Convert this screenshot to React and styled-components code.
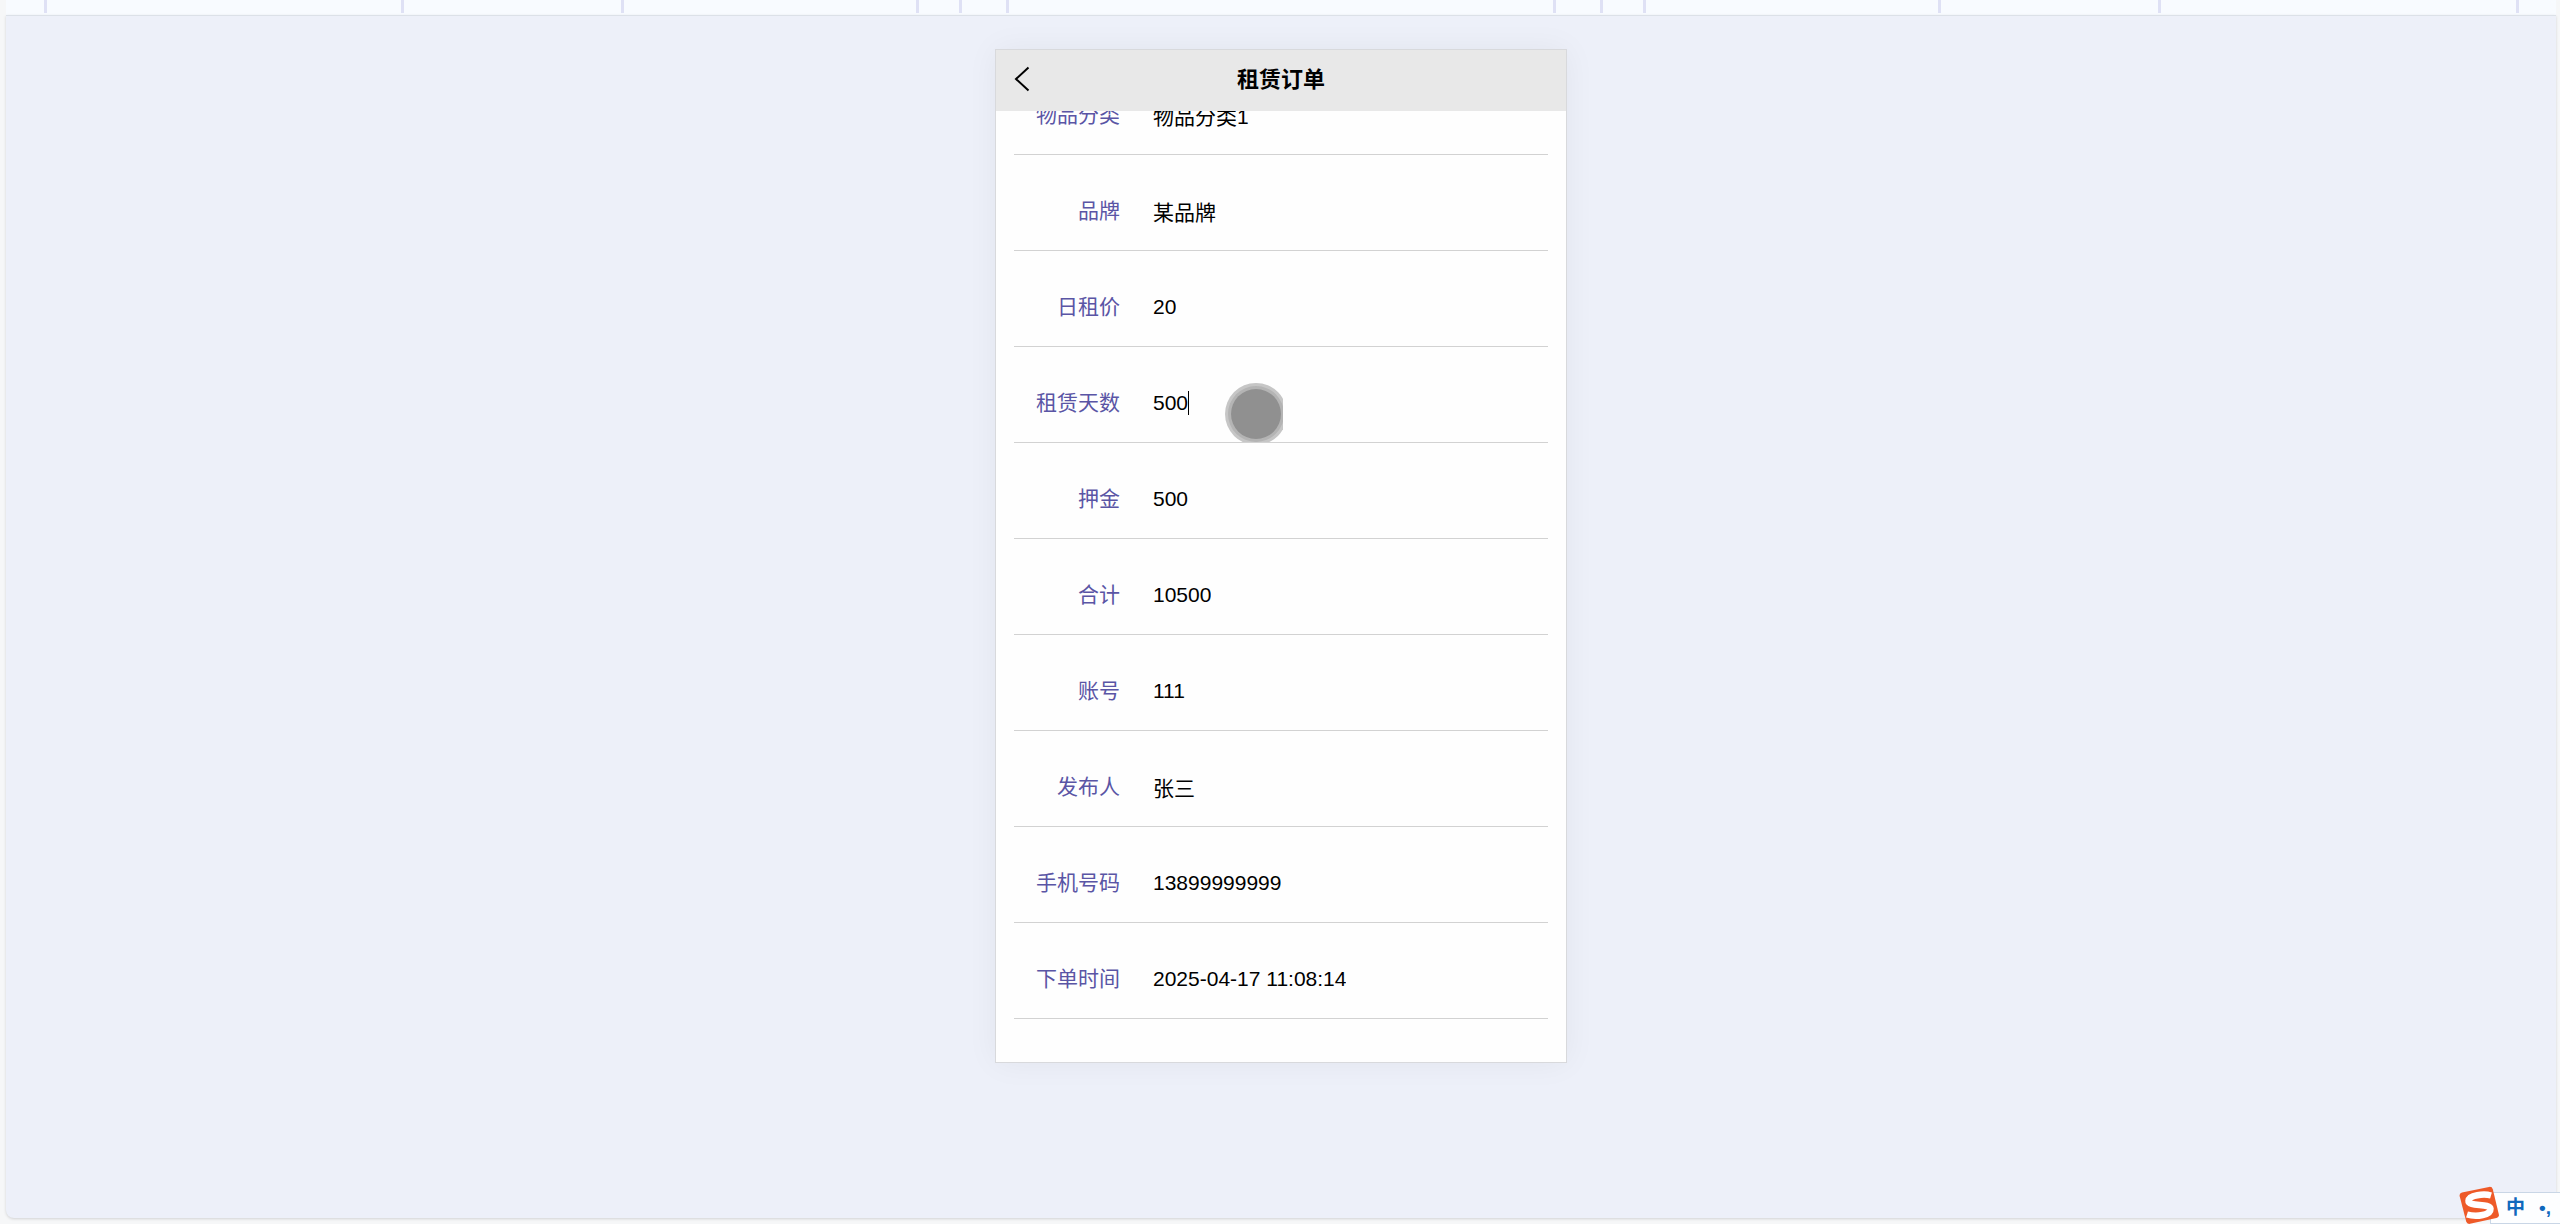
import { useLayoutEffect, useRef } from "react";
import styled, { createGlobalStyle } from "styled-components";

const GlobalStyle = createGlobalStyle`
  * {
    box-sizing: border-box;
  }
  body {
    margin: 0;
    background-color: #f6f7f8;
    font-family: "Liberation Sans", "Noto Sans CJK SC", sans-serif;
  }
`;

const Page = styled.div`
  min-height: 100vh;
  padding: 0 4px 6px 6px;
  display: flex;
  flex-direction: column;
`;

const TableStrip = styled.div`
  height: 15px;
  display: grid;
  grid-template-columns: 41fr 357fr 220fr 295fr 43fr 47fr 547fr 47fr 43fr 295fr 220fr 358fr 37fr;
  background-color: #f8fbff;
  padding-bottom: 2px;
`;

const StripCell = styled.div`
  border-right: 3px solid #dfe1f5;

  &:last-child {
    border-right: none;
  }
`;

const Main = styled.main`
  flex: 1;
  padding: 33px 20px 0;
  background-color: #edf0f9;
  border-top: 1px solid #dce1e8;
  border-radius: 0 0 8px 8px;
  box-shadow: 0 1px 3px rgba(0, 0, 0, 0.15);
`;

const Phone = styled.section`
  width: 100%;
  max-width: 572px;
  height: calc(100vh - 210px);
  margin: 0 auto;
  display: flex;
  flex-direction: column;
  background-color: #fefefe;
  border: 1px solid #d8d9dc;
  box-shadow: 0 0 30px rgba(0, 0, 0, 0.05);
`;

const Header = styled.header`
  height: 61px;
  flex-shrink: 0;
  display: grid;
  grid-template-columns: 60px 1fr 60px;
  align-items: center;
  padding-bottom: 2px;
  background-color: #e8e8e8;
`;

const BackButton = styled.button`
  display: flex;
  padding: 0 0 2px 18px;
  border: none;
  background: none;
  cursor: pointer;
`;

const Title = styled.h1`
  margin: 0;
  text-align: center;
  font-size: 22px;
  line-height: 32px;
  font-weight: 700;
  color: #000;
`;

const Body = styled.form`
  flex: 1;
  min-height: 0;
  overflow-y: auto;
  scrollbar-width: none;
  padding: 0 18px 43px;
`;

const Row = styled.div`
  position: relative;
  height: 96px;
  display: flex;
  align-items: center;
  padding-top: 16px;
  border-bottom: 1px solid #d2d2d2;
`;

const Label = styled.label`
  width: 106px;
  flex-shrink: 0;
  text-align: right;
  font-size: 21px;
  line-height: 30px;
  color: #5a55a5;
`;

const Input = styled.input`
  margin-left: 33px;
  padding: 0;
  min-width: 0;
  height: 30px;
  border: none;
  outline: none;
  background: none;
  color: #000;
  font-family: inherit;
  font-size: 21px;
  field-sizing: content;
`;

const Caret = styled.span`
  width: 1px;
  height: 24px;
  background-color: #000;
`;

const TouchPoint = styled.span`
  position: absolute;
  left: 211px;
  bottom: 0;
  width: 58px;
  height: 59px;
  overflow: hidden;

  svg {
    display: block;
  }
`;

const InputMethod = styled.aside`
  position: fixed;
  right: 0;
  bottom: 0;
  display: flex;
  align-items: flex-end;

  svg {
    position: relative;
    margin-right: -10px;
  }
`;

const InputMethodBar = styled.div`
  width: 70px;
  height: 32px;
  display: flex;
  align-items: center;
  justify-content: space-between;
  padding: 0 9px 0 15px;
  border: 1px solid #c9d6e6;
  border-right: none;
  background-color: #fdfeff;
  color: #0f68bd;
  font-size: 19px;
  line-height: 30px;
  font-weight: 700;
`;

const columns = 13;

const fields = [
  { name: "category", label: "物品分类", value: "物品分类1" },
  { name: "brand", label: "品牌", value: "某品牌" },
  { name: "price", label: "日租价", value: "20" },
  { name: "days", label: "租赁天数", value: "500", active: true },
  { name: "deposit", label: "押金", value: "500" },
  { name: "total", label: "合计", value: "10500" },
  { name: "account", label: "账号", value: "111" },
  { name: "publisher", label: "发布人", value: "张三" },
  { name: "phone", label: "手机号码", value: "13899999999" },
  { name: "time", label: "下单时间", value: "2025-04-17 11:08:14" },
];

const Field = ({ name, label, value, active }) => (
  <Row>
    <Label htmlFor={name}>{label}</Label>
    <Input id={name} name={name} defaultValue={value} />
    {active && (
      <>
        <Caret />
        <TouchPoint>
          <svg width="64" height="64" viewBox="0 0 64 64">
            <circle cx="31" cy="31" r="31" fill="#c6c6c6" />
            <circle cx="31" cy="31" r="28" fill="#b4b4b4" />
            <circle cx="31" cy="31" r="25" fill="#909090" />
          </svg>
        </TouchPoint>
      </>
    )}
  </Row>
);

const App = () => {
  const body = useRef(null);

  // open at the end of the order form
  useLayoutEffect(() => {
    body.current.scrollTop = body.current.scrollHeight;
  }, []);

  return (
    <Page>
      <GlobalStyle />
      <TableStrip>
        {Array.from({ length: columns }, (_, i) => (
          <StripCell key={i} />
        ))}
      </TableStrip>
      <Main>
        <Phone>
          <Header>
            <BackButton type="button" aria-label="返回">
              <svg width="16" height="26" viewBox="0 0 16 26" fill="none" stroke="#000" strokeWidth="2">
                <path d="M14.5 1.500 2 13l12.500 11.500" />
              </svg>
            </BackButton>
            <Title>租赁订单</Title>
          </Header>
          <Body ref={body}>
            {fields.map((item) => (
              <Field key={item.name} {...item} />
            ))}
          </Body>
        </Phone>
      </Main>
      <InputMethod>
        <svg width="42" height="38" viewBox="0 0 42 38">
          <path d="M4 6.500 31 .9q3-.5 3.800 2.300l6 25q.6 3-2.300 3.800L12 37.800q-3 .5-3.800-2.300L1.700 10.200Q1 7.300 4 6.500Z" fill="#ee5a28" />
          <path
            d="M33 9.500C26 7.500 11 9 10.500 14.800C10 21 32 17 32.500 22.800C32.800 28.800 19 31.500 9 28.500"
            fill="none"
            stroke="#fff"
            strokeWidth="6.500"
          />
        </svg>
        <InputMethodBar>
          <span>中</span>
          <span>•,</span>
        </InputMethodBar>
      </InputMethod>
    </Page>
  );
};

export default App;
